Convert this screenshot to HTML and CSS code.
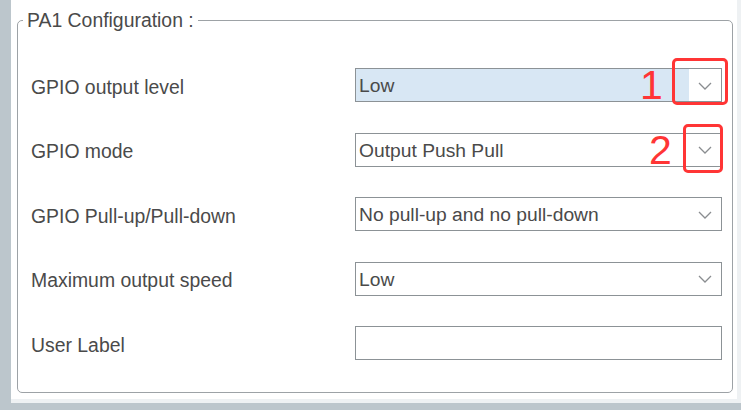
FILE: index.html
```html
<!DOCTYPE html>
<html>
<head>
<meta charset="utf-8">
<link rel="stylesheet" href="styles.css">
</head>
<body>
<div class="screen">
  <div class="panel">
    <div class="content">
      <fieldset class="config">
        <legend>PA1 Configuration :</legend>
        <div class="rows">
          <div class="lbl">GPIO output level</div>
          <div class="select selected">
            <span class="value">Low</span>
            <span class="arrow"><svg width="14" height="8" viewBox="0 0 14 8"><path d="M1 1 L7 7 L13 1" /></svg></span>
          </div>

          <div class="lbl">GPIO mode</div>
          <div class="select">
            <span class="value">Output Push Pull</span>
            <span class="arrow"><svg width="14" height="8" viewBox="0 0 14 8"><path d="M1 1 L7 7 L13 1" /></svg></span>
          </div>

          <div class="lbl">GPIO Pull-up/Pull-down</div>
          <div class="select">
            <span class="value">No pull-up and no pull-down</span>
            <span class="arrow"><svg width="14" height="8" viewBox="0 0 14 8"><path d="M1 1 L7 7 L13 1" /></svg></span>
          </div>

          <div class="lbl">Maximum output speed</div>
          <div class="select">
            <span class="value">Low</span>
            <span class="arrow"><svg width="14" height="8" viewBox="0 0 14 8"><path d="M1 1 L7 7 L13 1" /></svg></span>
          </div>

          <div class="lbl">User Label</div>
          <div class="textbox"></div>
        </div>
      </fieldset>

      <span class="num num1">1</span>
      <span class="redbox box1"></span>
      <span class="num num2">2</span>
      <span class="redbox box2"></span>
    </div>
  </div>
</div>
</body>
</html>
```

FILE: styles.css
```css
html, body {
  margin: 0;
  padding: 0;
}
body {
  width: 741px;
  height: 410px;
  overflow: hidden;
  background: #bcc6cc;
  font-family: "Liberation Sans", Arial, sans-serif;
  color: #4a4a4a;
}
.screen {
  padding-left: 11px;
  height: 410px;
  box-sizing: border-box;
}
.panel {
  width: 730px;
  height: 403px;
  box-sizing: border-box;
  padding: 0 4px 4px 0;
  background: #eef1f3;
}
.content {
  position: relative;
  width: 726px;
  height: 399px;
  box-sizing: border-box;
  padding-left: 6px;
  padding-top: 9px;
  background: #ffffff;
}
.config {
  margin: 0;
  width: 716px;
  height: 384px;
  box-sizing: border-box;
  border: 1px solid #9da2a6;
  border-radius: 5px;
  padding: 37px 10px 0 0;
  min-width: 0;
}
.config legend {
  margin-left: 5px;
  padding: 0 4px;
  font-size: 19.4px;
  line-height: 22px;
  color: #4a4a4a;
}
.rows {
  display: grid;
  grid-template-columns: 324px 367px;
  grid-auto-rows: 34px;
  row-gap: 30.5px;
  padding-left: 13px;
  align-items: center;
}
.lbl {
  font-size: 19.4px;
  line-height: 22px;
  padding-top: 3px;
  color: #4a4a4a;
}
.select, .textbox {
  height: 34px;
  box-sizing: border-box;
  border: 1px solid #8c9296;
  background: #fff;
}
.select {
  display: flex;
}
.value {
  flex: 1;
  padding-left: 3px;
  padding-top: 2px;
  font-size: 19.25px;
  line-height: 30px;
  color: #4a4a4a;
  white-space: nowrap;
}
.selected .value {
  background: #d8e7f4;
}
.arrow {
  width: 32px;
  display: flex;
  align-items: center;
  justify-content: center;
  padding-top: 1px;
}
.arrow svg path {
  fill: none;
  stroke: #8a8d90;
  stroke-width: 1.3;
}
.num {
  position: absolute;
  font-size: 41px;
  line-height: 40px;
  color: #ff3535;
}
.num1 { left: 629px; top: 65px; }
.num2 { left: 638px; top: 130px; }
.redbox {
  position: absolute;
  box-sizing: border-box;
  border: 3px solid #ff3535;
  border-radius: 5px;
}
.box1 { left: 661px; top: 58px; width: 56px; height: 47px; }
.box2 { left: 672px; top: 124px; width: 40px; height: 49px; }
```
